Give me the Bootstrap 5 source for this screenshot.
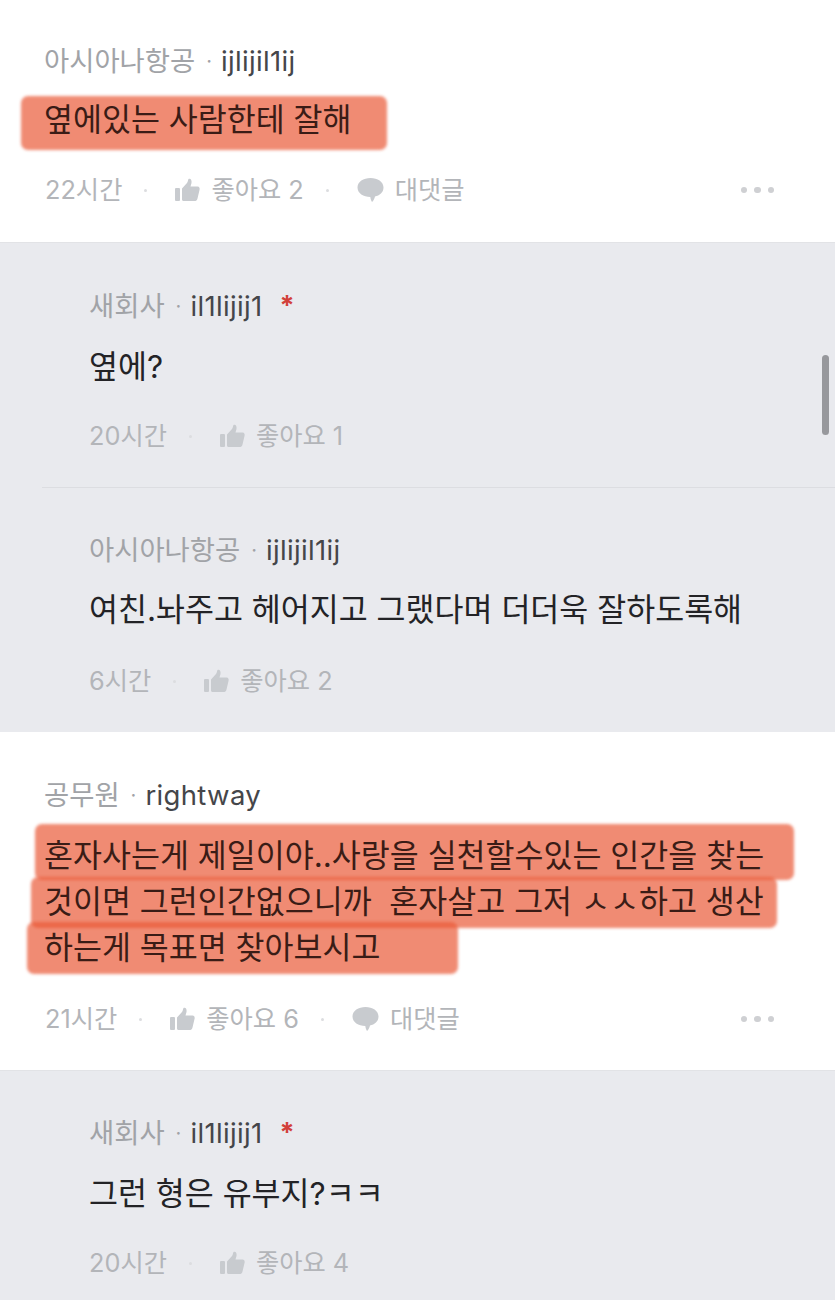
<!DOCTYPE html>
<html lang="ko">
<head>
	<meta charset="UTF-8" />
	<title>댓글</title>
	<link href="https://cdn.jsdelivr.net/npm/bootstrap@5.3.3/dist/css/bootstrap.min.css" rel="stylesheet" />
	<style>
		body { font-family: Inter, "Noto Sans CJK KR", sans-serif; background: #fff; height: 1300px; overflow: hidden; position: relative; }
		.cmt-top { padding: 41px 60px 31px 44px; height: 242px; }
		.cmt-top .meta { margin-left: 1px; }
		.cmt-big { height: 338px; }
		.cmt-replies { background: #e9eaee; border-top: 1px solid #e2e3e6; }
		.cmt-reply { margin-left: 42px; padding: 43px 60px 31px 47px; height: 245px; }
		.cmt-reply:first-child:not(:last-child) { height: 244px; }
		.cmt-reply + .cmt-reply { border-top: 1px solid #dcdde1; padding-top: 42px; }
		.cmt-reply-end { padding-top: 42px; }
		.who { height: 40px; font-size: 27.4px; line-height: 40px; color: #a1a3a7; white-space: nowrap; }
		.who-id { color: #45464a; font-size: 27.5px; letter-spacing: .35px; }
		.who-sep { margin: 0 9px 0 11px; font-size: 20px; color: #a1a3a7; }
		.who-star { color: #d2403a; font-size: 27px; font-weight: 700; margin-left: 17px; }
		.say { font-size: 31.5px; line-height: 46px; color: #232326; white-space: nowrap; }
		.hl { position: relative; width: fit-content; z-index: 0; color: #3a1c16; }
		.hl::before { content: ""; position: absolute; z-index: -1; background: rgba(233, 90, 55, .7); border-radius: 7px; filter: blur(1.5px); }
		.hl-a::before { left: -23px; right: -35px; top: -1px; bottom: -7px; }
		.hl-b::before { left: -9px; right: -30px; top: -9px; bottom: -1px; }
		.hl-c::before { left: -13px; right: -13px; top: -2px; bottom: -3px; }
		.hl-d::before { left: -17px; right: -77px; top: -3px; bottom: -3px; }
		.meta { height: 40px; font-size: 25.3px; line-height: 40px; color: #b3b5b9; white-space: nowrap; }
		.meta-dot { width: 3px; height: 3px; border-radius: 50%; background: #dcdde0; margin: 0 28px 0 22px; }
		.meta-ico { width: 25px; height: 24px; margin-right: 11px; flex: none; }
		.meta-ico-talk { width: 27px; height: 26px; margin-right: 11px; flex: none; }
		.meta-more { gap: 7px; margin-right: 1px; }
		.meta-more span { width: 6.5px; height: 6.5px; border-radius: 50%; background: #cfd0d3; }
		.scroll-thumb { position: absolute; left: 822px; top: 355px; width: 7px; height: 80px; border-radius: 4px; background: #97989c; }
	</style>
</head>
<body>
	<div class="cmt-top">
		<div class="who d-flex"><span>아시아나항공</span><span class="who-sep">·</span><span class="who-id">ijlijil1ij</span></div>
		<div class="say hl hl-a" style="margin-top:16px">옆에있는 사람한테 잘해</div>
		<div class="meta d-flex align-items-center" style="margin-top:27px">
			<span>22시간</span><span class="meta-dot"></span>
			<svg class="meta-ico" viewBox="0 0 25 24"><use href="#thumb"/></svg><span>좋아요 2</span><span class="meta-dot"></span>
			<svg class="meta-ico-talk" viewBox="0 0 27 26"><use href="#talk"/></svg><span>대댓글</span>
			<div class="meta-more d-flex ms-auto"><span></span><span></span><span></span></div>
		</div>
	</div>

	<div class="cmt-replies">
		<div class="cmt-reply">
			<div class="who d-flex"><span>새회사</span><span class="who-sep">·</span><span class="who-id">il1lijij1</span><span class="who-star">*</span></div>
			<div class="say" style="margin-top:18px">옆에?</div>
			<div class="meta d-flex align-items-center" style="margin-top:26px">
				<span>20시간</span><span class="meta-dot"></span>
				<svg class="meta-ico" viewBox="0 0 25 24"><use href="#thumb"/></svg><span>좋아요 1</span>
			</div>
		</div>
		<div class="cmt-reply">
			<div class="who d-flex"><span>아시아나항공</span><span class="who-sep">·</span><span class="who-id">ijlijil1ij</span></div>
			<div class="say" style="margin-top:17px">여친.놔주고 헤어지고 그랬다며 더더욱 잘하도록해</div>
			<div class="meta d-flex align-items-center" style="margin-top:28px">
				<span>6시간</span><span class="meta-dot"></span>
				<svg class="meta-ico" viewBox="0 0 25 24"><use href="#thumb"/></svg><span>좋아요 2</span>
			</div>
		</div>
	</div>

	<div class="cmt-top cmt-big">
		<div class="who d-flex" style="margin-top:2px"><span>공무원</span><span class="who-sep">·</span><span class="who-id">rightway</span></div>
		<div class="say" style="margin-top:18px">
			<div class="hl hl-b">혼자사는게 제일이야..사랑을 실천할수있는 인간을 찾는</div>
			<div class="hl hl-c">것이면 그런인간없으니까&nbsp; 혼자살고 그저 ㅅㅅ하고 생산</div>
			<div class="hl hl-d">하는게 목표면 찾아보시고</div>
		</div>
		<div class="meta d-flex align-items-center" style="margin-top:28px">
			<span>21시간</span><span class="meta-dot"></span>
			<svg class="meta-ico" viewBox="0 0 25 24"><use href="#thumb"/></svg><span>좋아요 6</span><span class="meta-dot"></span>
			<svg class="meta-ico-talk" viewBox="0 0 27 26"><use href="#talk"/></svg><span>대댓글</span>
			<div class="meta-more d-flex ms-auto"><span></span><span></span><span></span></div>
		</div>
	</div>

	<div class="cmt-replies">
		<div class="cmt-reply cmt-reply-end">
			<div class="who d-flex"><span>새회사</span><span class="who-sep">·</span><span class="who-id">il1lijij1</span><span class="who-star">*</span></div>
			<div class="say" style="margin-top:18px">그런 형은 유부지?ㅋㅋ</div>
			<div class="meta d-flex align-items-center" style="margin-top:26px">
				<span>20시간</span><span class="meta-dot"></span>
				<svg class="meta-ico" viewBox="0 0 25 24"><use href="#thumb"/></svg><span>좋아요 4</span>
			</div>
		</div>
	</div>

	<div class="scroll-thumb"></div>

	<svg width="0" height="0" class="d-none">
		<defs>
			<g id="thumb" fill="#c8cbcf">
				<rect x="0" y="10" width="5" height="13" rx="1"/>
				<path d="M7 10.5 L12 5 C13 3.5 13 2 13.5 1 C15.5 0 17 2 16.5 5 L15.5 8.5 L22.5 8.5 C24.5 8.5 25 10.5 24.5 12 L22.5 20.5 C22 22.5 21 23 19.5 23 L9 23 C8 23 7 22.5 7 21.5 Z"/>
			</g>
			<path id="talk" fill="#c8cbcf" d="M13.5 1 C20.5 1 26.5 4.8 26.5 10.5 C26.5 15.5 22.5 18.5 18 19.6 C17.6 21.5 16.5 24 15 25 C14 23.5 13.5 21.5 13.3 20 C6.5 20 .5 16.3 .5 10.5 C.5 4.8 6.5 1 13.5 1 Z"/>
		</defs>
	</svg>
</body>
</html>
